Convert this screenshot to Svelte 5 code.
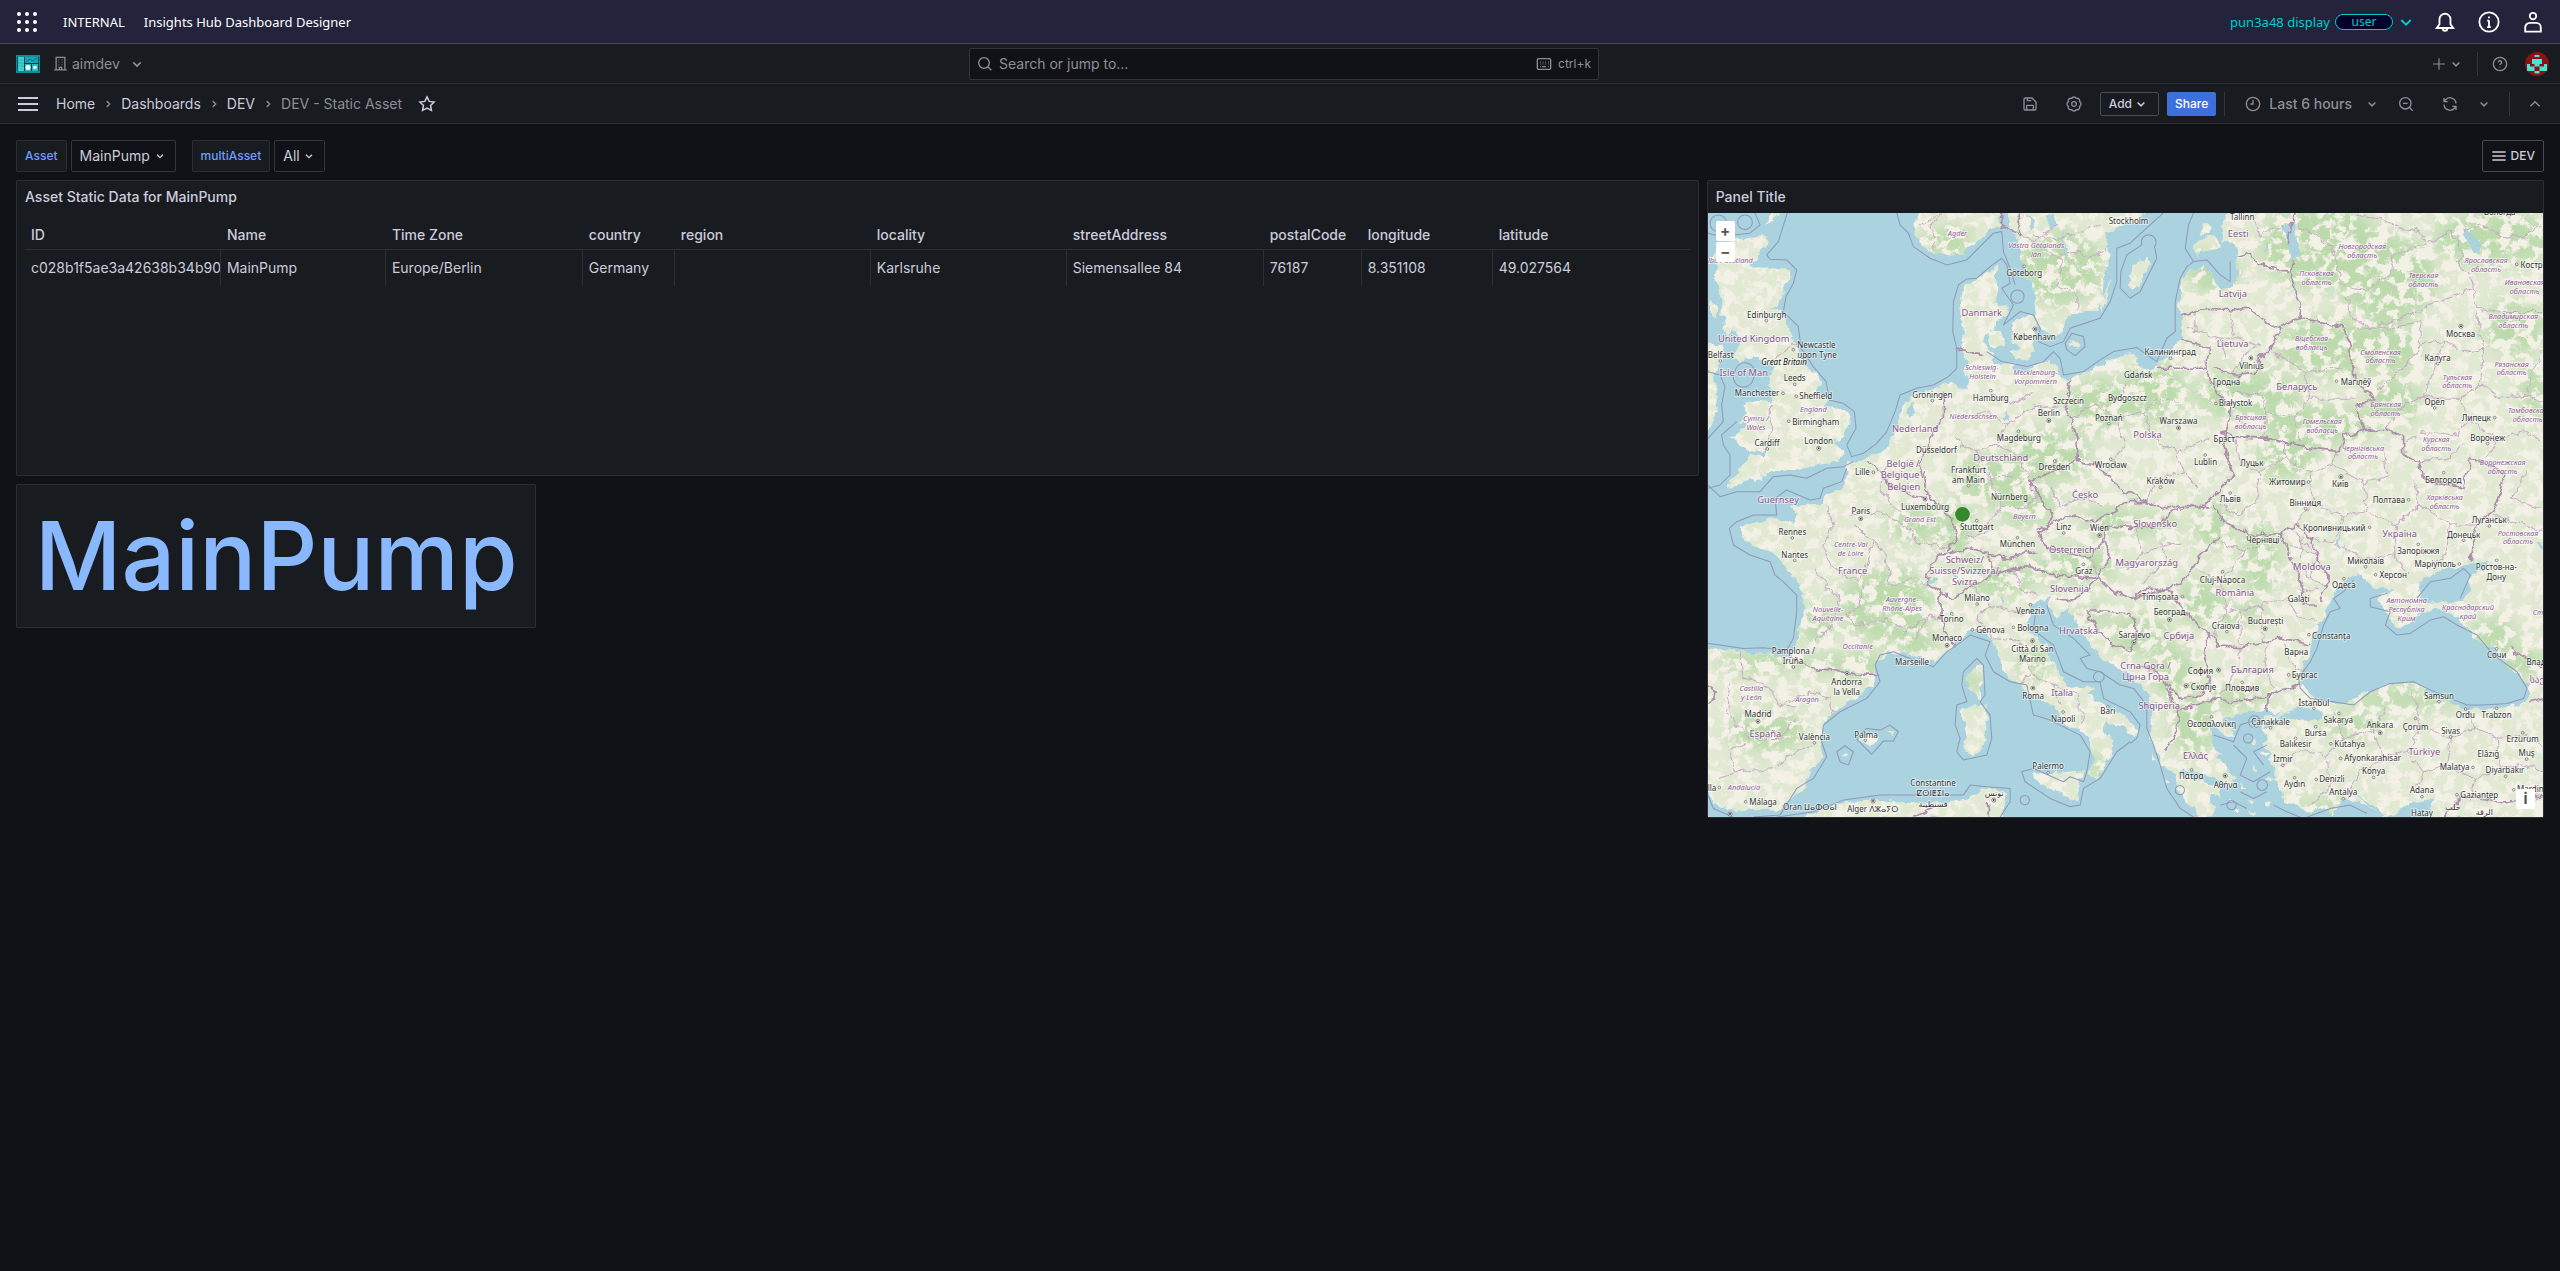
<script>
    // --- ICONS (24x24, stroked) ---
    const icons = {
        down: 'M7.5 10l4.5 4.5 4.5-4.5',
        wideDown: 'M5 9l7 7 7-7',
        right: 'M10 7.5l4.5 4.5-4.5 4.5',
        up: 'M5 15.5l7-7 7 7',
        building: 'M2 22h20M5 22V2h14v20M9 6h1M14 6h1M9 10h1M14 10h1M9 14h1M14 14h1M10 22v-4h4v4',
        search: 'M10.5 2.5a8 8 0 1 0 0 16a8 8 0 1 0 0-16M16.5 16.5l5 5',
        keyboard: 'M4 4h16a2 2 0 0 1 2 2v12a2 2 0 0 1-2 2H4a2 2 0 0 1-2-2V6a2 2 0 0 1 2-2zM6 9h1M10 9h1M14 9h1M18 9h1M6 12h1M10 12h1M14 12h1M18 12h1M6 16h1M9 16h6M18 16h1',
        plus: 'M12 2v20M2 12h20',
        help: 'M12 2a10 10 0 1 0 0 20a10 10 0 1 0 0-20M9.5 9.5a2.5 2.5 0 1 1 3.5 2.4c-.7.4-1 .8-1 1.6M12 16.3v1',
        star: 'M12 2.5l2.9 6 6.6.9-4.8 4.6 1.2 6.6L12 17.5l-5.9 3.1 1.2-6.6L2.5 9.4l6.6-.9z',
        save: 'M5 3h10l6 6v10a2 2 0 0 1-2 2H5a2 2 0 0 1-2-2V5a2 2 0 0 1 2-2zM8 3v4h6M7 21v-6a1 1 0 0 1 1-1h8a1 1 0 0 1 1 1v6',
        gear: 'M8.600 3.700a3.700 3.700 0 0 1 6.800 0a3.700 3.700 0 0 1 4.900 4.900a3.700 3.700 0 0 1 0 6.800a3.700 3.700 0 0 1-4.900 4.900a3.700 3.700 0 0 1-6.800 0a3.700 3.700 0 0 1-4.900-4.900a3.700 3.700 0 0 1 0-6.800a3.700 3.700 0 0 1 4.900-4.900zM12 8.500a3.500 3.500 0 1 0 0 7a3.500 3.500 0 1 0 0-7',
        clock: 'M12 2a10 10 0 1 0 0 20a10 10 0 1 0 0-20M12 6v6H8',
        zoomOut: 'M11 2.500a8.500 8.500 0 1 0 0 17a8.500 8.500 0 1 0 0-17M17 17l5 5M7.500 11h7',
        sync: 'M21 11A9 9 0 0 0 5 6L3 8.500M3 3v5.500h5.500M3 13a9 9 0 0 0 16 5l2-2.500M21 21v-5.500h-5.500',
        bars: 'M2 6h20M2 12h20M2 18h20',
        bell: 'M3 18.500h18l-3-4V9a6 6 0 0 0-12 0v5.500zM9.500 19a2.500 2.500 0 0 0 5 0',
        info: 'M12 1.500a10.500 10.500 0 1 0 0 21a10.500 10.500 0 1 0 0-21M12 10v7.500M12 6v2M10 10.500h2M10 17.500h4',
        user: 'M12 2a3.500 3.500 0 1 0 0 7a3.500 3.500 0 1 0 0-7M3.500 22.500v-4.500a5 5 0 0 1 5-5h7a5 5 0 0 1 5 5v4.500z'
    };

    const crumbs = ['Home', 'Dashboards', 'DEV'];

    const variables = [
        { name: 'Asset', options: ['MainPump'] },
        { name: 'multiAsset', options: ['All'] }
    ];

    // --- TABLE ---
    const columns = [
        { key: 'ID', width: 196, value: 'c028b1f5ae3a42638b34b90c' },
        { key: 'Name', width: 165, value: 'MainPump' },
        { key: 'Time Zone', width: 197, value: 'Europe/Berlin' },
        { key: 'country', width: 92, value: 'Germany' },
        { key: 'region', width: 196, value: '' },
        { key: 'locality', width: 196, value: 'Karlsruhe' },
        { key: 'streetAddress', width: 197, value: 'Siemensallee 84' },
        { key: 'postalCode', width: 98, value: '76187' },
        { key: 'longitude', width: 131, value: '8.351108' },
        { key: 'latitude', width: 197, value: '49.027564' }
    ];
    const totalWidth = columns.reduce((sum, c) => sum + c.width, 0);

    // --- MAP ---
    const land = [
        // mainland
        'M900 180L885 210 892 250 885 285 920 300 915 340 890 345 885 370 855 385 850 410 880 445 870 470 900 480 940 475 935 500 980 490 1020 480 1045 465 1070 490 1085 520 1110 525 1160 505 1220 470 1275 450 1305 447 1320 488 1360 490 1375 470 1415 450 1410 430 1440 405 1445 340 1435 300 1440 230 1465 200 1515 180 1540 225 1565 250 1600 245 1610 210 1610 160 1605 120 1565 110 1565 60 1585 20H2535V1840H2190L2190 1800 2205 1775 2180 1780 2120 1800 2090 1830 2050 1836 2000 1800 1970 1795 1930 1780 1900 1830 1870 1810 1820 1825 1790 1800 1760 1790 1740 1760 1720 1720 1725 1690 1700 1670 1720 1640 1690 1620 1700 1590 1680 1565 1690 1540 1740 1530 1690 1520 1640 1520 1600 1530 1565 1545 1575 1560 1610 1580 1585 1575 1610 1595 1570 1585 1545 1560 1530 1575 1535 1620 1565 1650 1545 1660 1580 1680 1590 1710 1605 1735 1585 1740 1545 1720 1500 1705 1450 1690 1430 1700 1545 1740 1560 1770 1530 1770 1545 1810 1530 1840H1500L1480 1800 1455 1795 1430 1740 1425 1705 1385 1680 1370 1640 1350 1600 1355 1560 1350 1480 1320 1440 1275 1400 1230 1375 1180 1335 1130 1265 1100 1205 1070 1240 1045 1200 1055 1180 1000 1190 985 1230 985 1255 990 1280 1045 1335 1070 1405 1110 1445 1185 1445 1165 1465 1220 1510 1275 1535 1310 1570 1305 1595 1270 1565 1235 1555 1215 1540 1210 1580 1240 1610 1235 1650 1210 1700 1180 1720 1165 1710 1180 1660 1165 1600 1150 1580 1100 1560 1070 1520 1060 1500 1030 1490 990 1475 960 1440 910 1400 895 1360 885 1310 850 1280 820 1275 790 1290 750 1330 700 1370 640 1350 570 1340 530 1370 530 1430 470 1475 400 1525 365 1570 360 1610 370 1655 330 1700 320 1740 260 1790 230 1820 160 1815 110 1820 90 1810 40 1800 20 1750V1335L80 1330 150 1345 210 1345 270 1355 290 1310 305 1250 315 1190 295 1130 260 1090 235 1055 190 1035 130 1010 120 970 180 945 230 940 280 955 290 930 275 905 310 900 370 895 370 875 420 855 440 820 445 775 490 765 540 745 570 710 595 660 600 610 640 570 700 550 750 535 790 550 810 540 795 500 800 470 785 430 795 390 780 350 780 290 785 250 830 225 870 195z',
        // Great Britain and Ireland
        'M100 105L150 95 205 95 200 125 180 150 150 185 200 185 240 190 270 190 270 215 250 260 235 300 215 310 240 315 250 330 270 380 285 410 300 445 310 480 350 510 365 540 345 560 370 570 385 585 370 605 400 605 440 620 452 650 435 690 400 715 430 735 437 745 415 765 370 775 320 790 280 795 240 795 200 805 180 810 185 830 150 820 110 835 75 850 75 840 110 810 130 780 150 755 190 750 200 735 150 740 110 715 90 695 125 680 145 650 115 650 140 625 130 605 150 590 180 585 215 590 220 560 205 535 215 500 225 480 195 475 165 450 130 470 95 465 110 440 120 410 110 380 95 370 85 400 70 370 80 340 60 330 65 290 55 250 40 230 50 190 35 160 50 130z',
        'M20 415L60 420 75 450 55 480 40 510 50 560 50 620 40 670 20 680z',
        'M30 280L55 310 50 335 30 320zM195 60L215 50 240 20 215 30z',
        // Scandinavia
        'M655 20L640 60 650 100 690 140 740 155 790 145 830 110 870 75 900 55 895 40 905 20z',
        'M925 20L935 70 960 130 970 190 1000 250 1010 300 1000 340 1030 380 1060 395 1090 380 1095 340 1110 325 1150 320 1190 325 1205 290 1210 230 1225 180 1225 130 1215 90 1260 60 1310 50 1340 20z',
        'M870 375L905 385 915 420 885 430 865 405zM935 350L990 330 1010 350 1005 400 1000 440 975 465 950 460 925 440 960 430 935 410z',
        'M1115 405L1138 420 1130 432 1112 420zM1235 215L1225 250 1205 320 1200 300 1215 260zM1345 160L1350 180 1300 258 1290 245 1290 205 1315 170z',
        'M1505 50L1535 65 1530 88 1505 85zM1480 125L1505 100 1545 95 1562 120 1515 135 1490 160z',
        // Mediterranean
        'M1000 1705L1040 1705 1110 1700 1155 1695 1135 1745 1135 1790 1090 1770 1040 1745 1000 1725z',
        'M780 1520L820 1500 855 1495 860 1540 855 1620 820 1655 790 1640 800 1590 790 1550z',
        'M843 1370L848 1420 840 1480 815 1465 800 1420 825 1390z',
        'M478 1602L510 1585 535 1600 515 1625 490 1612zM555 1575L582 1585 578 1592zM425 1655L440 1637 445 1652z',
        'M300 1840L400 1800 450 1790 560 1785 640 1795 740 1790 800 1780 850 1755 890 1750 920 1765 915 1800 900 1840z',
        'M1655 1600l20 8-10 14zM1680 1640l35 0-18 16zM1660 1680l15 18-14 4zM1620 1740l18 8-14 8zM1640 1780l22 4-10 14zM1580 1780l18 5-9 10zM1690 1720l30 0-18 10zM1600 1810l20 5-12 12zM1690 1790l24 4-14 9zM1645 1822l24 0-12 12zM1570 1690l40 30-6 8-36-28zM1395 1720l14 16-12 4zM1355 1645l14 22-10 2z'
    ];

    const water = [
        'M1930 1125L1890 1180 1875 1240 1850 1260 1835 1300 1830 1350 1815 1370 1800 1400 1800 1440 1830 1470 1870 1490 1930 1500 1960 1480 2010 1455 2090 1440 2150 1435 2180 1465 2240 1490 2290 1510 2350 1515 2400 1505 2460 1500 2490 1470 2480 1430 2440 1395 2400 1370 2385 1335 2340 1310 2300 1270 2270 1240 2230 1210 2190 1210 2160 1230 2130 1255 2100 1270 2080 1265 2070 1230 2040 1200 2030 1180 2080 1160 2060 1150 2030 1155 1990 1125 1975 1110z',
        'M2150 1160L2170 1120 2230 1095 2300 1080 2365 1065 2350 1090 2300 1120 2310 1150 2290 1190 2240 1195 2170 1190z',
        'M1760 1520L1800 1505 1850 1515 1875 1530 1850 1550 1800 1545 1760 1540 1690 1572 1692 1562z',
        'M1742 60L1782 55 1785 100 1800 145 1775 170 1765 115zM2285 70L2320 90 2350 130 2320 145 2300 110zM1692 120l8 0 0 20-8 0z',
        'M920 620L925 650 910 640zM640 590L650 620 625 640 620 620zM1915 960L1920 990 1920 1030 1912 1030zM1960 1765L2000 1790 2055 1830 2040 1830zM2515 1015l14-10 0 30zM760 1105l15 5-5 15zM680 1125l30-8 2 8-36 8zM1275 1090l14-8 2 5-14 10zM905 1175l8 14-8 8z',
        'M980 24L1005 60 990 80zM1085 80L1100 120 1092 160zM1030 30L1060 24 1070 60 1050 80z'
    ];

    // national borders
    const borders = [
        'M850 450L800 440 770 430', 'M1110 525L1105 570 1090 610 1110 640 1130 700 1135 770 1190 780 1220 810 1260 850 1300 870 1340 890 1400 910 1450 900 1530 910',
        'M1130 770L1080 790 990 830 1010 870 1060 930 1020 990 1040 1030 1100 1040 1170 1060 1210 1010 1220 960 1290 970 1380 960 1430 910',
        'M1010 980L1060 950 1120 930 1180 950 1220 930 1280 890 1340 890', 'M730 560L730 640 700 680 680 740 660 780 680 860 700 890 760 940 770 1000 750 1030 720 1050',
        'M500 770L540 800 570 840 640 870 680 880', 'M720 1040L680 1110 680 1140 720 1150 720 1240 740 1290 770 1320',
        'M720 1050L800 1030 860 1040 880 1110 820 1140 760 1180 715 1160', 'M860 1050L920 1060 1010 1040', 'M880 1110L940 1090 990 1085 1060 1110 1190 1120 1230 1060 1210 1010',
        'M270 1355L330 1390 400 1395 470 1410 540 1410', 'M20 1440L45 1460 40 1490 20 1500',
        'M1070 1180L1120 1190 1170 1140 1195 1120 1240 1160 1290 1180 1400 1150 1450 1130 1500 1050 1560 1000', 'M1160 1215L1220 1215 1290 1225 1310 1300 1290 1340 1230 1310 1190 1270z',
        'M1290 1180L1340 1150 1400 1150 1460 1230 1520 1280 1560 1320 1620 1325 1700 1310 1750 1300 1830 1320', 'M1530 1290L1510 1340 1530 1420 1500 1470 1440 1480 1400 1440 1370 1400 1300 1380',
        'M1530 1480L1600 1490 1680 1480 1730 1460 1800 1440', 'M1430 1520L1500 1500 1540 1480', 'M1420 1600L1440 1530 1400 1450M1420 1600L1390 1640', 'M1700 1530L1700 1480 1730 1460',
        'M1540 900L1580 960 1660 990 1740 990 1790 960 1830 1000 1860 1080 1890 1120 1860 1190', 'M1740 990L1770 1060 1800 1120 1810 1200 1850 1200', 'M1440 910L1510 900 1530 880 1600 810 1570 720 1590 600 1550 560 1520 490 1370 490',
        'M1520 490L1525 430 1440 405', 'M1440 335L1520 310 1600 315 1640 310 1700 350 1740 370 1720 420 1680 460 1680 500 1600 510 1540 490', 'M1800 340L1800 300 1780 260 1780 220 1770 200 1700 190 1650 150 1610 160',
        'M1770 200L1780 170M1765 115L1770 60 1790 24', 'M1740 370L1790 340 1860 350 1930 370 1950 420 1960 500 1990 560 2030 580 1970 600 1990 680 1930 690 1920 740 1840 730 1770 715 1700 700 1600 695 1560 680',
        'M1990 680L2060 670 2110 700 2110 750 2160 770 2170 820 2290 850 2310 760 2380 780 2410 810 2400 870 2380 920 2330 960 2320 1020 2310 1070', 'M2430 1330L2480 1360 2529 1390M2490 1490L2529 1480',
        'M905 24L905 60 960 90 950 24', 'M2529 1770L2460 1790 2380 1790 2290 1770 2230 1836M640 1836L700 1810M870 1836L860 1790'
    ];

    // provinces and oblasts
    const regions = [
        'M380 905L400 960 370 1030 390 1080 470 1130 500 1080 520 1010 460 960', 'M350 1090L380 1150 420 1180 400 1250 350 1310', 'M490 1130L480 1200 440 1230 470 1260 560 1240 620 1280 690 1230', 'M520 1010L560 1050 570 1140 640 1120 700 1150',
        'M450 930L540 920 620 960 650 1010 740 1030', 'M560 780L540 860 600 920', 'M120 1340L130 1420 200 1440 240 1500 290 1510', 'M90 1430L80 1520 150 1600 240 1600 290 1540', 'M150 1600L90 1640 110 1700 60 1720M110 1700L220 1690 280 1640 340 1620M250 1500L330 1460 390 1480 400 1530',
        'M790 640L860 620 920 660 890 720 830 740 760 700', 'M890 720L960 760 990 830M920 660L1000 600 1080 610', 'M860 800L900 900 860 980 800 1000M830 740L860 820 940 810', 'M870 560L930 600 1000 560', 'M900 900L980 910 1010 870',
        'M1110 640L1190 600 1250 640 1330 620 1380 580 1440 590', 'M1250 640L1270 720 1220 800M1330 620L1360 700 1430 740 1450 800M1430 740L1530 700M1270 560L1290 500M1340 890L1370 820 1450 800 1490 850', 'M1300 960L1330 1040 1280 1100M1170 1060L1200 1110M1050 840L1080 900 1150 880 1210 900M1330 1040L1440 1010',
        'M940 1085L960 1150 1010 1170M820 1140L870 1200 970 1230M870 1200L830 1240 880 1300 960 1310M960 1310L990 1400 960 1440M990 1400L1060 1440 1080 1500M1060 1440L1130 1470 1150 1560M640 1300L690 1230 720 1240',
        'M1480 320L1490 380 1560 400 1580 460M1590 320L1600 400 1680 420M1680 420L1620 460 1600 510M1560 400L1600 400M1460 370L1490 380', 'M1600 560L1680 570 1700 620 1780 640 1830 580 1810 500 1720 440', 'M1810 500L1880 490 1960 500M1830 580L1970 580M1700 620L1690 700M1780 640L1800 710',
        'M1790 60L1890 120 1910 180 1920 240 2000 260 2070 200 2080 150 2180 120 2250 80', 'M1940 270L1950 330 2010 370 2100 340 2170 310 2220 290 2270 270 2320 250 2330 310 2400 320 2529 320', 'M1970 370L2080 370 2160 350 2160 420 2120 480 2060 530 2030 560', 'M2250 80L2290 150 2270 180 2310 210 2320 250M2180 120L2160 80 2100 70 2050 40 1960 30M2290 80L2340 60 2420 100 2470 90 2529 60',
        'M2160 420L2230 410 2290 440 2350 430 2330 320M2230 410L2200 500 2170 570 2110 600 2060 670M2350 430L2340 540 2280 580 2210 580 2170 570M2340 540L2400 580 2480 570 2529 590M2480 570L2500 500 2529 440', 'M2280 580L2300 640 2270 690 2180 680 2120 710M2300 640L2390 700 2470 680 2529 710M2390 700L2360 760M2160 770L2240 760 2290 720M2480 800L2430 880 2529 910M2380 930L2470 960 2529 980',
        'M1600 700L1620 780 1680 800 1750 760 1750 710M1680 800L1660 900 1610 930 1560 900M1750 760L1830 800 1900 780 1910 740M1830 800L1840 900 1780 960M1900 780L1990 830 2060 820 2050 740M1990 830L2000 920 2090 960 2160 900 2140 830M1840 900L1930 930 2000 920M1930 930L1900 1010 1830 1000M2090 960L2080 1050 1980 1060 1900 1010M2160 900L2250 960 2240 1050 2180 1090M2250 960L2330 960M2080 1050L2120 1110',
        'M1560 1010L1640 1040 1700 1000M1500 1100L1560 1130 1640 1040M1560 1130L1580 1220 1680 1200 1760 1180M1580 1220L1540 1290M1680 1200L1690 1310M1760 1180L1800 1240 1850 1250M1620 1220L1620 1320M1380 1000L1400 1060 1330 1130M1620 1325L1610 1400 1560 1470M1700 1320L1690 1400 1720 1450M1610 1400L1690 1400M1750 1310L1770 1370 1810 1400',
        'M1780 980L1850 1050 1830 1120 1880 1140M1770 1020L1850 1050M1790 1080L1830 1120M1800 1160L1850 1150M1810 990L1800 1060',
        'M1900 1520L1930 1600 1880 1650 1800 1640 1740 1680M1930 1600L2020 1580 2060 1500M2020 1580L2050 1660 1980 1700 1940 1780M2050 1660L2120 1640 2160 1560 2140 1470M2120 1640L2170 1700 2130 1770M2160 1560L2250 1600 2320 1570 2300 1500M2250 1600L2240 1680 2170 1700M2240 1680L2320 1720 2400 1690 2390 1600 2320 1570M2390 1600L2470 1590 2529 1620M2400 1690L2470 1680 2529 1700M1880 1650L1890 1740 1830 1800M2320 1720L2310 1790',
        'M660 60L720 30M700 130L690 60 740 24M1000 110L1090 170 1070 240 1130 270 1130 310M1070 150L1140 140 1170 160 1220 130M960 100L1000 110 1070 60M1000 90L1080 100 1200 60M200 480L240 450 270 430 290 410M215 600L210 700 190 750M1660 30L1680 90 1760 60'
    ];

    // territorial waters
    const maritime = [
        'M262 24L235 110 200 150 210 163 260 165 290 195 280 235 258 275 250 320 295 365 303 430 340 485 378 530 388 585 430 595 463 620 468 670 440 720 455 755 490 745 530 715 560 680 585 620 600 570 650 550 700 540 745 515 770 490 770 430 758 380 760 290 775 240 800 222 830 220 870 185 905 160 920 180 930 235 905 250 915 265 940 300 910 360 960 320 1000 330 1020 370 1015 410 1050 425 1090 410 1110 370 1170 350 1200 340 1230 290 1250 230 1250 130 1290 115 1350 60 1390 24',
        'M590 24L600 60 625 85 640 125 690 160 740 180 800 165 850 115 880 85 905 80 910 140 930 190 945 240', 'M932 275a20 20 0 1 1 40 0a20 20 0 1 1-40 0', 'M1095 415L1115 385 1150 395 1155 425 1125 452 1100 435z', 'M860 440L905 470 980 485 1030 470 1060 440 1080 460 1090 510 1150 500 1200 465 1240 440 1310 428 1370 470 1400 400 1425 380 1425 290 1440 220 1460 185 1480 170 1455 130 1465 60 1480 24',
        'M1480 170L1520 165 1560 210 1590 230 1590 170', 'M1325 120a22 22 0 1 1 38 5L1370 160 1350 200 1320 260 1290 280 1260 250 1262 200 1280 150z', 'M24 840L60 875 110 860 180 860 220 815 270 810 320 820 380 790 430 785 460 770M24 500L60 510 75 545 65 600 70 650 24 700M90 750L70 720 65 690 110 650M105 500a30 30 0 1 1 55 20a30 30 0 1 1-55-20M90 750V810L60 840 24 850',
        'M24 1315L60 1320 130 1330 190 1328 260 1335 280 1300 290 1220 290 1170 250 1130 225 1110 210 1070 150 1050 100 1020 88 970 110 950 160 930 230 930 225 880 260 855 330 885 360 880 370 850 425 830 440 790', 'M24 1770L40 1810 100 1836M160 1836L240 1830 290 1750 340 1720 380 1655 365 1610 370 1560 420 1520 500 1480 540 1430 525 1380 540 1350 580 1340 640 1365 700 1385 740 1340 770 1320 810 1290 870 1310 855 1350 880 1400 930 1430 980 1440 1000 1530 1050 1545 1140 1590 1170 1640 1160 1700 1150 1730',
        'M790 1400L830 1360 850 1380 855 1470 840 1490 870 1530 875 1600 860 1650 790 1665 770 1640 780 1600 765 1560 770 1500 800 1490 785 1440z', 'M468 1600L500 1570 540 1575 570 1560 595 1580 580 1608 550 1608 515 1648z', 'M410 1640L435 1622 460 1640 445 1680 420 1670z', 'M1150 1730L1110 1715 1090 1730 1000 1690 965 1700 975 1730 1050 1780 1110 1805 1140 1800 1150 1750 1200 1720 1250 1640 1290 1610', 'M960 1785a14 14 0 1 1 28 0a14 14 0 1 1-28 0',
        'M1005 1230L1000 1275 1060 1320 1090 1400 1150 1430 1200 1430 1210 1480 1290 1520 1320 1560 1310 1600 1290 1615', 'M1040 1200L1060 1260 1120 1300 1170 1350 1140 1360 1160 1390 1200 1400 1260 1440 1300 1450 1340 1500 1340 1570 1360 1620 1380 1680 1400 1750 1440 1810 1480 1836', 'M1180 1415a16 16 0 1 1 32 0a16 16 0 1 1-32 0M1425 1755a14 14 0 1 1 28 0a14 14 0 1 1-28 0',
        'M230 1836L340 1820 430 1785 540 1770 700 1770 790 1770 810 1740 860 1745 930 1750 930 1790 900 1836',
        'M1960 1125L1930 1160 1900 1180 1920 1210 1890 1220 1870 1260 1850 1330 1830 1370 1795 1420 1800 1450 1830 1480 1900 1490 1960 1500 2010 1460 2070 1435 2140 1430 2180 1450 2250 1480 2300 1500 2350 1500 2420 1495 2470 1480 2480 1450 2450 1400 2380 1350 2330 1290 2270 1260 2230 1235 2190 1245 2130 1285 2090 1290 2055 1260 2070 1220 2010 1205 2010 1180 2060 1165', 'M2150 1180L2190 1130 2250 1120 2290 1090 2310 1110 2280 1180',
        'M1540 1590L1600 1610 1620 1560 1680 1540M1600 1620L1640 1660 1620 1710 1660 1730 1710 1700M1620 1760L1660 1780 1700 1760M1560 1800L1600 1790 1640 1810M1700 1620L1660 1640 1690 1680M1720 1800L1760 1820 1800 1836M1820 1836L1890 1810 1950 1800 2000 1825M1645 1550a18 18 0 1 1 36 0a18 18 0 1 1-36 0M1630 1600a14 14 0 1 1 28 0a14 14 0 1 1-28 0M1580 1800a14 14 0 1 1 28 0a14 14 0 1 1-28 0M1670 1740a16 16 0 1 1 32 0a16 16 0 1 1-32 0',
        'M30 55a25 25 0 1 1 50 0a25 25 0 1 1-50 0M113 52a22 22 0 1 1 44 0a22 22 0 1 1-44 0M165 24L180 60 150 85 60 95 24 85'
    ];

    // cx, cy, rx, ry of wooded areas
    const woods = [
        [740, 110, 80, 45], [1080, 190, 130, 110], [1540, 200, 80, 60], [1860, 120, 180, 130], [2060, 220, 150, 130], [2380, 100, 180, 80], [2440, 370, 90, 80], [1880, 430, 150, 90],
        [2060, 430, 100, 80], [2080, 590, 80, 70], [2500, 560, 40, 90], [1860, 660, 170, 60], [1760, 760, 90, 60], [1640, 570, 160, 70], [1360, 560, 100, 90], [1200, 600, 100, 80], [1050, 750, 120, 80], [870, 820, 110, 70], [980, 900, 90, 60],
        [1130, 1080, 130, 50], [900, 1120, 110, 50], [770, 980, 50, 90], [640, 960, 80, 50], [560, 1200, 140, 110], [350, 1260, 50, 60], [650, 1320, 60, 40], [470, 1380, 130, 35], [200, 1370, 160, 30], [200, 1580, 120, 60],
        [1540, 960, 60, 70], [1680, 1060, 60, 110], [1500, 1190, 70, 70], [1590, 1220, 110, 30], [1320, 1290, 90, 60], [1420, 1400, 60, 80], [1180, 1230, 60, 30], [1480, 1560, 70, 90], [1600, 1480, 110, 30], [1000, 1370, 50, 50],
        [2380, 1290, 70, 50], [2460, 1370, 80, 40], [2120, 1480, 170, 30], [1960, 1560, 90, 40], [1880, 1810, 100, 25], [820, 1430, 25, 45], [1230, 950, 90, 40], [1350, 960, 90, 30], [1190, 1680, 30, 40]
    ];

    const labels = {
        city: [
            ['Edinburgh', 200, 338], ['Newcastle', 349, 429], ['upon Tyne', 351, 459], ['Belfast', 62, 459], ['Leeds', 284, 528], ['Manchester', 171, 574], ['Sheffield', 347, 582], ['Birmingham', 347, 659], ['London', 356, 717], ['Cardiff', 201, 723],
            ['Göteborg', 972, 212], ['København', 1003, 404], ['Groningen', 697, 578], ['Hamburg', 872, 587], ['Szczecin', 1105, 597], ['Berlin', 1046, 634], ['Poznań', 1226, 647], ['Magdeburg', 956, 707], ['Düsseldorf', 709, 744], ['Lille', 487, 810], ['Frankfurt', 805, 804], ['am Main', 805, 834],
            ['Dresden', 1063, 795], ['Wrocław', 1232, 789], ['Nürnberg', 928, 886], ['Luxembourg', 675, 915], ['Paris', 482, 928], ['Stockholm', 1285, 58], ['Bydgoszcz', 1282, 587], ['Gdańsk', 1314, 518], ['Tallinn', 1626, 46], ['Калининград', 1410, 450], ['Vilnius', 1654, 491],
            ['Гродна', 1579, 539], ['Białystok', 1606, 604], ['Магілёў', 1967, 540], ['Warszawa', 1435, 657], ['Брэст', 1572, 710], ['Lublin', 1516, 780], ['Луцьк', 1655, 783], ['Kraków', 1381, 838], ['Львів', 1590, 892], ['Житомир', 1761, 840], ['Київ', 1920, 846], ['Вінниця', 1815, 903], ['Полтава', 2066, 893],
            ['Белгород', 2229, 833], ['Воронеж', 2362, 709], ['Липецк', 2328, 649], ['Орёл', 2203, 600], ['Калуга', 2212, 467], ['Москва', 2281, 396], ['Костр', 2494, 188], ['Вологда', 2398, 30],
            ['Rennes', 277, 990], ['Nantes', 284, 1058], ['Stuttgart', 830, 975], ['München', 952, 1025], ['Linz', 1091, 975], ['Wien', 1198, 978], ['Graz', 1151, 1106], ['Milano', 831, 1188], ['Venezia', 991, 1226], ['Torino', 755, 1252], ['Genova', 871, 1283], ['Bologna', 998, 1277], ['Monaco', 741, 1308],
            ['Città di San', 997, 1340], ['Marino', 997, 1370], ['Marseille', 636, 1379], ['Pamplona /', 280, 1347], ['Iruña', 279, 1377], ['Andorra', 440, 1441], ['la Vella', 440, 1471], ['Madrid', 174, 1537], ['València', 343, 1604], ['Palma', 498, 1598], ['Roma', 999, 1481], ['Napoli', 1089, 1550], ['Bari', 1223, 1528],
            ['Palermo', 1044, 1693], ['Constantine', 699, 1744], ['ⵇⵙⵏⵟⵉⵏⴰ', 699, 1773], ['قسنطينة', 699, 1805], ['تونس', 882, 1773], ['Málaga', 189, 1801], ['lla', 36, 1757], ['Oran ⵡⴰⵀⵔⴰⵏ', 330, 1815], ['Alger ⴷⵣⴰⵢⵔ', 518, 1820],
            ['Чернівці', 1688, 1014], ['Кропивницький', 1902, 978], ['Луганськ', 2367, 955], ['Донецьк', 2290, 998], ['Запоріжжя', 2154, 1047], ['Миколаїв', 1996, 1076], ['Маріуполь', 2205, 1086], ['Херсон', 2079, 1120], ['Ростов-на-', 2388, 1094], ['Дону', 2388, 1124], ['Одеса', 1931, 1150],
            ['Cluj-Napoca', 1567, 1134], ['Timișoara', 1380, 1185], ['Galați', 1795, 1191], ['Београд', 1408, 1230], ['București', 1696, 1258], ['Craiova', 1577, 1271], ['Sarajevo', 1303, 1300], ['Constanța', 1893, 1301], ['Варна', 1788, 1350], ['София', 1501, 1406], ['Бургас', 1813, 1418], ['Скопје', 1510, 1455], ['Пловдив', 1626, 1459],
            ['Сочи', 2389, 1360], ['Влад', 2507, 1380], ['İstanbul', 1841, 1502], ['Samsun', 2216, 1482], ['Ordu', 2295, 1539], ['Trabzon', 2389, 1538], ['Θεσσαλονίκη', 1534, 1565], ['Çanakkale', 1711, 1559], ['Sakarya', 1914, 1554], ['Ankara', 2039, 1570], ['Çorum', 2146, 1574], ['Sivas', 2251, 1586], ['Bursa', 1846, 1592],
            ['Erzurum', 2467, 1611], ['Balıkesir', 1786, 1627], ['Kütahya', 1948, 1626], ['İzmir', 1748, 1672], ['Afyonkarahisar', 2017, 1669], ['Elâzığ', 2364, 1656], ['Muş', 2479, 1653], ['Konya', 2020, 1708], ['Malatya', 2263, 1696], ['Diyarbakır', 2414, 1705], ['Πάτρα', 1473, 1723], ['Αθήνα', 1576, 1749],
            ['Aydın', 1783, 1746], ['Denizli', 1895, 1731], ['Antalya', 1929, 1771], ['Adana', 2165, 1765], ['Gaziantep', 2337, 1778], ['Mardin', 2490, 1762], ['Hatay', 2165, 1832], ['حلب', 2258, 1816], ['الرقة', 2352, 1830]
        ],
        country: [
            ['United Kingdom', 161, 411], ['Isle of Man', 131, 513], ['Danmark', 845, 334], ['Nederland', 645, 680], ['Deutschland', 902, 767], ['België /', 609, 787], ['Belgique /', 609, 820], ['Belgien', 611, 854], ['Guernsey', 234, 895], ['Česko', 1155, 880],
            ['Eesti', 1614, 96], ['Latvija', 1598, 275], ['Lietuva', 1597, 427], ['Беларусь', 1790, 555], ['Polska', 1342, 698], ['France', 458, 1107], ['Schweiz/', 794, 1074], ['Suisse/Svizzera/', 792, 1107], ['Svizra', 794, 1141], ['Österreich', 1115, 1044], ['Slovenija', 1108, 1160], ['Hrvatska', 1135, 1286],
            ['Italia', 1086, 1472], ['España', 196, 1595], ['Slovensko', 1365, 967], ['Magyarország', 1340, 1082], ['România', 1604, 1172], ['Moldova', 1835, 1095], ['Україна', 2098, 997], ['Србија', 1436, 1302], ['България', 1656, 1403], ['Crna Gora /', 1336, 1393], ['Црна Гора', 1336, 1426], ['Shqipëria', 1377, 1511], ['Ελλάς', 1486, 1663],
            ['Türkiye', 2172, 1651], ['საქ', 2510, 1433]
        ],
        region: [
            ['Alba / Scotland', 85, 174], ['Agder', 772, 93], ['Västra Götalands', 1008, 129], ['län', 1008, 156], ['Schleswig-', 845, 494], ['Holstein', 847, 521], ['Mecklenburg-', 1006, 511], ['Vorpommern', 1006, 538], ['England', 340, 622], ['Cymru /', 168, 647], ['Wales', 168, 674], ['Niedersachsen', 819, 641],
            ['Псковская', 1849, 212], ['область', 1849, 239], ['Новгородская', 1986, 133], ['область', 1986, 159], ['Тверская', 2169, 219], ['область', 2169, 246], ['Ярославская', 2357, 174], ['область', 2357, 200], ['Ивановская', 2473, 240], ['область', 2473, 266], ['Владимирская', 2439, 342], ['область', 2439, 369],
            ['Віцебская', 1834, 409], ['вобласць', 1834, 436], ['Смоленская', 2041, 449], ['область', 2041, 475], ['Рязанская', 2434, 485], ['область', 2434, 511], ['Тульская', 2271, 524], ['область', 2271, 550], ['Брянская', 2056, 605], ['область', 2056, 632], ['Тамбовская', 2482, 625], ['область', 2482, 651],
            ['Брэсцкая', 1651, 646], ['вобласць', 1651, 672], ['Гомельская', 1866, 657], ['вобласць', 1866, 684], ['Чернігівська', 1988, 737], ['область', 1988, 763], ['Курская', 2208, 711], ['область', 2208, 738], ['Воронежская', 2407, 779], ['область', 2407, 806], ['Харківська', 2233, 885], ['область', 2233, 912], ['Ростовская', 2453, 992], ['область', 2453, 1018],
            ['Grand Est', 659, 952], ['Bayern', 973, 942], ['Centre-Val', 452, 1027], ['de Loire', 452, 1054], ['Auvergne-', 606, 1190], ['Rhône-Alpes', 606, 1217], ['Nouvelle-', 384, 1222], ['Aquitaine', 384, 1249], ['Occitanie', 473, 1331], ['Castilla', 154, 1459], ['y León', 154, 1486], ['Aragón', 321, 1490], ['Andalucía', 132, 1756],
            ['Автономна', 2119, 1195], ['Республіка', 2119, 1221], ['Крим', 2119, 1248], ['Краснодарский', 2303, 1215], ['край', 2303, 1242], ['Ст', 2513, 1229]
        ],
        island: [['Great Britain', 252, 481]]
    };

    const towns = [
        [199, 347], [280, 434], [61, 468], [284, 538], [249, 565], [289, 574], [266, 649], [202, 732], [972, 184], [697, 587], [872, 557], [1105, 568], [1226, 656], [955, 679], [520, 802], [1064, 768], [1232, 763], [805, 842], [1411, 460], [1547, 596], [1909, 529], [1515, 750], [1381, 847], [1590, 864],
        [1825, 831], [1816, 911], [2125, 884], [2230, 803], [2362, 716], [2383, 638], [2203, 609], [2212, 476], [2449, 178], [277, 999], [284, 1066], [830, 947], [952, 998], [1091, 984], [1150, 1078], [831, 1197], [991, 1199], [755, 1226], [817, 1274], [940, 1267], [280, 1386], [343, 1613], [496, 1606], [1089, 1521], [1223, 1505],
        [1044, 1703], [137, 1790], [58, 1747], [1687, 985], [2008, 967], [2367, 963], [2290, 1006], [2154, 1018], [1996, 1085], [2277, 1077], [2026, 1109], [2389, 1066], [1931, 1121], [1567, 1100], [1447, 1175], [1580, 1280], [1826, 1289], [1765, 1409], [1626, 1432], [2389, 1331], [1841, 1510], [2216, 1490], [2296, 1512], [2389, 1510],
        [1534, 1535], [1711, 1568], [1916, 1525], [2146, 1540], [2251, 1595], [1846, 1565], [2467, 1583], [1786, 1600], [1892, 1616], [1921, 1660], [1748, 1681], [2479, 1662], [2020, 1717], [2318, 1687], [2416, 1714], [1474, 1694], [1783, 1718], [1848, 1723], [1929, 1781], [2165, 1775], [2270, 1769], [2440, 1754]
    ];
    const capitals = [[356, 730], [1004, 372], [1046, 647], [675, 882], [1652, 459], [1435, 669], [1922, 815], [2282, 364], [482, 941], [1198, 991], [741, 1321], [997, 1307], [441, 1405], [174, 1549], [998, 1449], [1408, 1244], [1695, 1271], [1301, 1312], [1555, 1395], [1458, 1442], [2040, 1583], [1575, 1712], [519, 1788], [881, 1785], [90, 1827]];
</script>

{#snippet icon(name, size)}
    <svg class="icon" width={size} height={size} viewBox="0 0 24 24" aria-hidden="true">
        <path d={icons[name]} />
    </svg>
{/snippet}

<div class="topbar">
    <div class="group">
        <button class="apps" aria-label="Apps">
            <svg width="20" height="20" viewBox="0 0 20 20" aria-hidden="true">
                {#each [2, 10, 18] as cy}
                    {#each [2, 10, 18] as cx}
                        <circle {cx} {cy} r="2" />
                    {/each}
                {/each}
            </svg>
        </button>
        <span>INTERNAL</span>
        <span>Insights Hub Dashboard Designer</span>
    </div>
    <div class="group account">
        <button class="role">
            pun3a48 display <span class="pill">user</span>
            {@render icon('wideDown', 16)}
        </button>
        <button aria-label="Notifications">{@render icon('bell', 22)}</button>
        <button aria-label="Information">{@render icon('info', 22)}</button>
        <button aria-label="User">{@render icon('user', 22)}</button>
    </div>
</div>

<div class="navbar">
    <div class="group org">
        <svg width="24" height="18" viewBox="0 0 24 18" aria-hidden="true">
            <rect width="24" height="18" fill="#0f8d97" />
            <rect x="1" y="2" width="22" height="14" fill="#083d4a" />
            <rect x="2" y="2" width="6" height="14" fill="#3fd0d4" />
            <path d="M2 5h6M2 8h6M2 11h6" stroke="#2bb3bb" />
            <rect x="9" y="2" width="13" height="6" fill="#13a9bd" />
            <path d="M10 7l4-3 3 2 4-3" stroke="#0b6c7a" fill="none" />
            <rect x="9" y="9" width="6" height="7" fill="#2fb8bd" />
            <rect x="16" y="9" width="6" height="7" fill="#2fb8bd" />
            <circle cx="12" cy="12.500" r="2.500" fill="#e8ffff" />
            <circle cx="19" cy="12.500" r="1.800" fill="#e8ffff" />
        </svg>
        <button class="org-picker">
            {@render icon('building', 15)}
            <span>aimdev</span>
            {@render icon('down', 20)}
        </button>
    </div>
    <label class="search">
        {@render icon('search', 16)}
        <input type="text" placeholder="Search or jump to..." aria-label="Search or jump to" />
        {@render icon('keyboard', 16)}
        <span class="hint">ctrl+k</span>
    </label>
    <div class="group nav-right">
        <button class="new" aria-label="New">{@render icon('plus', 14)}{@render icon('down', 18)}</button>
        <span class="divider"></span>
        <button aria-label="Help">{@render icon('help', 16)}</button>
        <button aria-label="Profile">
            <svg class="avatar" width="24" height="24" viewBox="0 0 24 24" aria-hidden="true">
                <rect width="24" height="24" fill="#8c1016" />
                <path fill="#45e6cf" d="M9.500 3h5v2h-5zM7 7h10v5h-2.500v2.500h-5V12H7zM2 12h3v2.500h4.500V19H2zM22 12h-3v2.500h-4.500V19H22zM9.500 19h5v2.500h-5z" />
            </svg>
        </button>
    </div>
</div>

<div class="toolbar">
    <div class="group crumbs">
        <button class="menu" aria-label="Menu">{@render icon('bars', 24)}</button>
        <nav>
            {#each crumbs as crumb}
                <a href="#{crumb.toLowerCase()}">{crumb}</a>
                {@render icon('right', 16)}
            {/each}
            <span class="current">DEV - Static Asset</span>
        </nav>
        <button class="fav" aria-label="Mark as favorite">{@render icon('star', 18)}</button>
    </div>
    <div class="group tools">
        <button class="tool" aria-label="Save">{@render icon('save', 16)}</button>
        <button class="tool" aria-label="Settings">{@render icon('gear', 16)}</button>
        <button class="add">Add {@render icon('down', 18)}</button>
        <button class="share">Share</button>
        <span class="divider"></span>
        <button class="time">{@render icon('clock', 16)}<span>Last 6 hours</span>{@render icon('down', 18)}</button>
        <button class="tool" aria-label="Zoom out">{@render icon('zoomOut', 16)}</button>
        <button class="tool" aria-label="Refresh">{@render icon('sync', 16)}</button>
        <button class="narrow" aria-label="Refresh interval">{@render icon('down', 18)}</button>
        <span class="divider"></span>
        <button class="tool" aria-label="Hide bar">{@render icon('up', 16)}</button>
    </div>
</div>

<main>
    <div class="controls">
        {#each variables as v}
            <div class="variable">
                <label for={v.name}>{v.name}</label>
                <div class="picker">
                    <select id={v.name}>
                        {#each v.options as option}
                            <option>{option}</option>
                        {/each}
                    </select>
                    {@render icon('down', 16)}
                </div>
            </div>
        {/each}
        <button class="links">{@render icon('bars', 16)}DEV</button>
    </div>

    <div class="grid">
        <section class="panel data">
            <h2>Asset Static Data for MainPump</h2>
            <div class="table-wrap">
                <table>
                    <colgroup>
                        {#each columns as c}
                            <col style="width: {(c.width / totalWidth) * 100}%" />
                        {/each}
                    </colgroup>
                    <thead>
                        <tr>
                            {#each columns as c}<th>{c.key}</th>{/each}
                        </tr>
                    </thead>
                    <tbody>
                        <tr>
                            {#each columns as c}<td>{c.value}</td>{/each}
                        </tr>
                    </tbody>
                </table>
            </div>
        </section>

        <section class="panel map-panel">
            <h2>Panel Title</h2>
            <div class="map">
                <svg viewBox="24 24 2505 1812" preserveAspectRatio="xMidYMid slice" role="img" aria-label="Map of Europe">
                    <defs>
                        <filter id="rough" x="0" y="0" width="100%" height="100%" color-interpolation-filters="sRGB">
                            <feTurbulence type="fractalNoise" baseFrequency="0.035" numOctaves="3" seed="4" />
                            <feDisplacementMap in="SourceGraphic" scale="26" xChannelSelector="R" yChannelSelector="G" />
                        </filter>
                        <filter id="grain" x="0" y="0" width="100%" height="100%" color-interpolation-filters="sRGB">
                            <feGaussianBlur in="SourceAlpha" stdDeviation="22" result="area" />
                            <feTurbulence type="fractalNoise" baseFrequency="0.03" numOctaves="5" seed="11" />
                            <feColorMatrix values="0 0 0 0 0.72  0 0 0 0 0.85  0 0 0 0 0.66  8 0 0 0 -3.3" />
                            <feComposite in2="area" operator="in" />
                        </filter>
                        <clipPath id="land">
                            {#each land as d}<path {d} />{/each}
                        </clipPath>
                    </defs>
                    <g filter="url(#rough)">
                        <rect x="-40" y="-40" width="2640" height="1940" fill="#aad3df" />
                        {#each land as d}<path class="land" {d} />{/each}
                        <g clip-path="url(#land)">
                            <g filter="url(#grain)" opacity="0.3"><rect x="-40" y="-40" width="2640" height="1940" /></g>
                            <g filter="url(#grain)" opacity="0.9">
                                {#each woods as [cx, cy, rx, ry]}<ellipse {cx} {cy} {rx} {ry} />{/each}
                            </g>
                        </g>
                        {#each water as d}<path class="water" {d} />{/each}
                        {#each regions as d}<path class="province" {d} />{/each}
                        {#each borders as d}<path class="border" {d} />{/each}
                    </g>
                    {#each maritime as d}<path class="sea-line" {d} />{/each}
                    {#each towns as [cx, cy]}<circle class="town" {cx} {cy} r="4" />{/each}
                    {#each capitals as [cx, cy]}
                        <circle class="town" {cx} {cy} r="6" />
                        <circle {cx} {cy} r="3" fill="#444" />
                    {/each}
                    {#each Object.entries(labels) as [kind, list]}
                        {#each list as [text, x, y]}<text class={kind} {x} {y}>{text}</text>{/each}
                    {/each}
                    <circle cx="787" cy="928" r="22" fill="#37872d" />
                </svg>
                <div class="zoom">
                    <button aria-label="Zoom in">+</button>
                    <button aria-label="Zoom out">–</button>
                </div>
                <button class="credits" aria-label="Attributions">i</button>
            </div>
        </section>

        <section class="panel stat">MainPump</section>
    </div>
</main>

<style>
    :global(body) {
        background: #111217;
        color: #ccccdc;
        font-family: Inter, Roboto, sans-serif;
        font-size: 14px;
        line-height: 22px;
        margin: 0;
    }

    button, input, select {
        font: inherit;
        color: inherit;
        background: none;
        border: none;
        padding: 0;
        margin: 0;
    }

    button { display: flex; align-items: center; justify-content: center; cursor: pointer; }

    .icon { fill: none; stroke: currentColor; stroke-width: 2; flex: none; display: block; }
    .group { display: flex; align-items: center; }
    .divider { width: 1px; height: 24px; background: #34363d; }

    /* top bar */
    .topbar {
        display: flex;
        justify-content: space-between;
        height: 43px;
        padding: 0 16px;
        background: #23233c;
        border-bottom: 1px solid #4c4c68;
        color: #fff;
        font-family: "Noto Sans", sans-serif;
        font-size: 13px;
    }
    .topbar .group { gap: 19px; }
    .apps { width: 22px; margin-right: 6px; fill: #fff; }
    .topbar .account { gap: 22px; }
    .role { gap: 5px; color: #00cccc; }
    .pill {
        width: 56px;
        line-height: 14px;
        font-size: 12px;
        border: 1px solid #00cccc;
        border-radius: 8px;
        background: #000028;
    }
    .role .icon { stroke-width: 3; }
    .role + button { margin-left: -2px; }

    /* nav bar */
    .navbar {
        display: grid;
        grid-template-columns: 3fr 2fr 3fr;
        gap: 8px;
        align-items: center;
        height: 39px;
        padding: 0 8px 0 16px;
        background: #181b1f;
        border-bottom: 1px solid #2c2e33;
        color: #8e8e99;
    }
    .org { gap: 13px; }
    .org-picker { gap: 4px; }
    .org-picker span { margin-right: 3px; }
    .search {
        display: flex;
        align-items: center;
        gap: 6px;
        height: 30px;
        padding: 0 7px;
        background: #111217;
        border: 1px solid #34353b;
        border-radius: 2px;
    }
    .search input { flex: 1; min-width: 0; outline: none; }
    .search input::placeholder { color: #8e8e99; opacity: 1; }
    .hint { font-size: 12px; }
    .nav-right { justify-content: flex-end; }
    .new { gap: 1px; margin-right: 12px; }
    .nav-right .divider + button { margin: 0 17px 0 14px; }
    .avatar { border-radius: 50%; margin-right: 3px; }

    /* toolbar */
    .toolbar {
        display: flex;
        justify-content: space-between;
        height: 39px;
        padding: 0 16px;
        background: #181b1f;
        border-bottom: 1px solid #2c2e33;
    }
    .menu { margin-right: 16px; }
    nav { display: flex; align-items: center; gap: 5px; }
    nav a { color: #ccccdc; text-decoration: none; }
    nav .icon, .current { color: #8e8e99; }
    .fav { margin-left: 16px; }
    .tools { color: #8e8e99; }
    .tool { width: 44px; height: 32px; }
    .tools .tool:last-child { width: 50px; margin-right: -16px; }
    .add, .share { height: 24px; box-sizing: border-box; border-radius: 2px; font-size: 12px; font-weight: 500; padding: 0 8px; }
    .add { border: 1px solid #4a4b52; color: #ccccdc; margin: 0 8px 0 4px; }
    .share { background: #3d71d9; color: #fff; margin-right: 8px; }
    .time { gap: 8px; padding: 0 3px 0 20px; font-weight: 500; }
    .time span { margin-right: 3px; }
    .narrow { width: 24px; margin-right: 13px; }

    /* variables */
    main { padding: 16px; }
    .controls { display: flex; gap: 16px; margin-bottom: 8px; }
    .variable { display: flex; gap: 4px; }
    .variable label, .links {
        box-sizing: border-box;
        height: 32px;
        line-height: 30px;
        padding: 0 8px;
        font-size: 12px;
        font-weight: 500;
        border: 1px solid #2c2e33;
        border-radius: 2px;
    }
    .variable label { background: #181b1f; color: #6e9fff; }
    .picker { display: grid; align-items: center; border: 1px solid #34353b; border-radius: 2px; }
    .picker > * { grid-area: 1 / 1; }
    .picker select { appearance: none; height: 30px; padding: 0 24px 0 8px; outline: none; }
    .picker .icon { justify-self: end; margin-right: 7px; pointer-events: none; }
    .links { margin-left: auto; gap: 4px; border-color: #4a4b52; }

    /* panels */
    .grid {
        display: grid;
        grid-template-columns: repeat(24, 1fr);
        grid-auto-rows: 30px;
        gap: 8px;
    }
    .panel {
        display: flex;
        flex-direction: column;
        min-width: 0;
        background: #181b1f;
        border: 1px solid #2c2e33;
        border-radius: 2px;
    }
    .data { grid-column: 1 / span 16; grid-row: 1 / span 8; }
    .map-panel { grid-column: 17 / span 8; grid-row: 1 / span 17; }
    .stat {
        grid-column: 1 / span 5;
        grid-row: 9 / span 4;
        align-items: center;
        justify-content: center;
        font-size: 95px;
        line-height: 114px;
        font-weight: 500;
        color: #8ab8ff;
    }
    h2 { margin: 0; padding: 0 8px; font-size: 14px; font-weight: 500; line-height: 32px; }

    .table-wrap { padding: 8px; }
    table { width: 100%; table-layout: fixed; border-collapse: separate; border-spacing: 0; }
    th, td { padding: 0 6px; text-align: left; white-space: nowrap; overflow: hidden; }
    th { height: 28px; font-weight: 500; border-bottom: 1px solid #2c2e33; }
    td { height: 36px; border-right: 1px solid #2c2e33; }
    td:first-child { padding-right: 0; }
    td:last-child { border-right: none; }

    /* map */
    .map { position: relative; flex: 1; min-height: 0; }
    .map > svg { display: block; width: 100%; height: 100%; }
    .land { fill: #f3f0e6; }
    .water { fill: #aad3df; }
    .province, .border, .sea-line { fill: none; stroke-linejoin: round; }
    .province { stroke: #c5adc4; stroke-width: 3; }
    .border { stroke: #ac8eac; stroke-width: 5; }
    .sea-line { stroke: #8f98b8; stroke-width: 3; }
    .town { fill: #fff; stroke: #555; stroke-width: 2; }
    .map text {
        text-anchor: middle;
        font-family: "Noto Sans", "DejaVu Sans", sans-serif;
        font-size: 24px;
        fill: #333;
        stroke: #fff;
        stroke-opacity: 0.6;
        stroke-width: 5px;
        paint-order: stroke;
    }
    .map .country { font-size: 28px; fill: #85568b; }
    .map .region { font-size: 22px; font-style: italic; fill: #91609a; }
    .map .island { font-style: italic; fill: #111; }

    .zoom { position: absolute; top: 8px; left: 8px; display: grid; gap: 1px; }
    .zoom button, .credits {
        width: 19px;
        height: 20px;
        background: #fff;
        border-radius: 2px;
        color: #555;
        font-size: 15px;
        font-weight: 700;
    }
    .credits { position: absolute; right: 8px; bottom: 8px; }
</style>
